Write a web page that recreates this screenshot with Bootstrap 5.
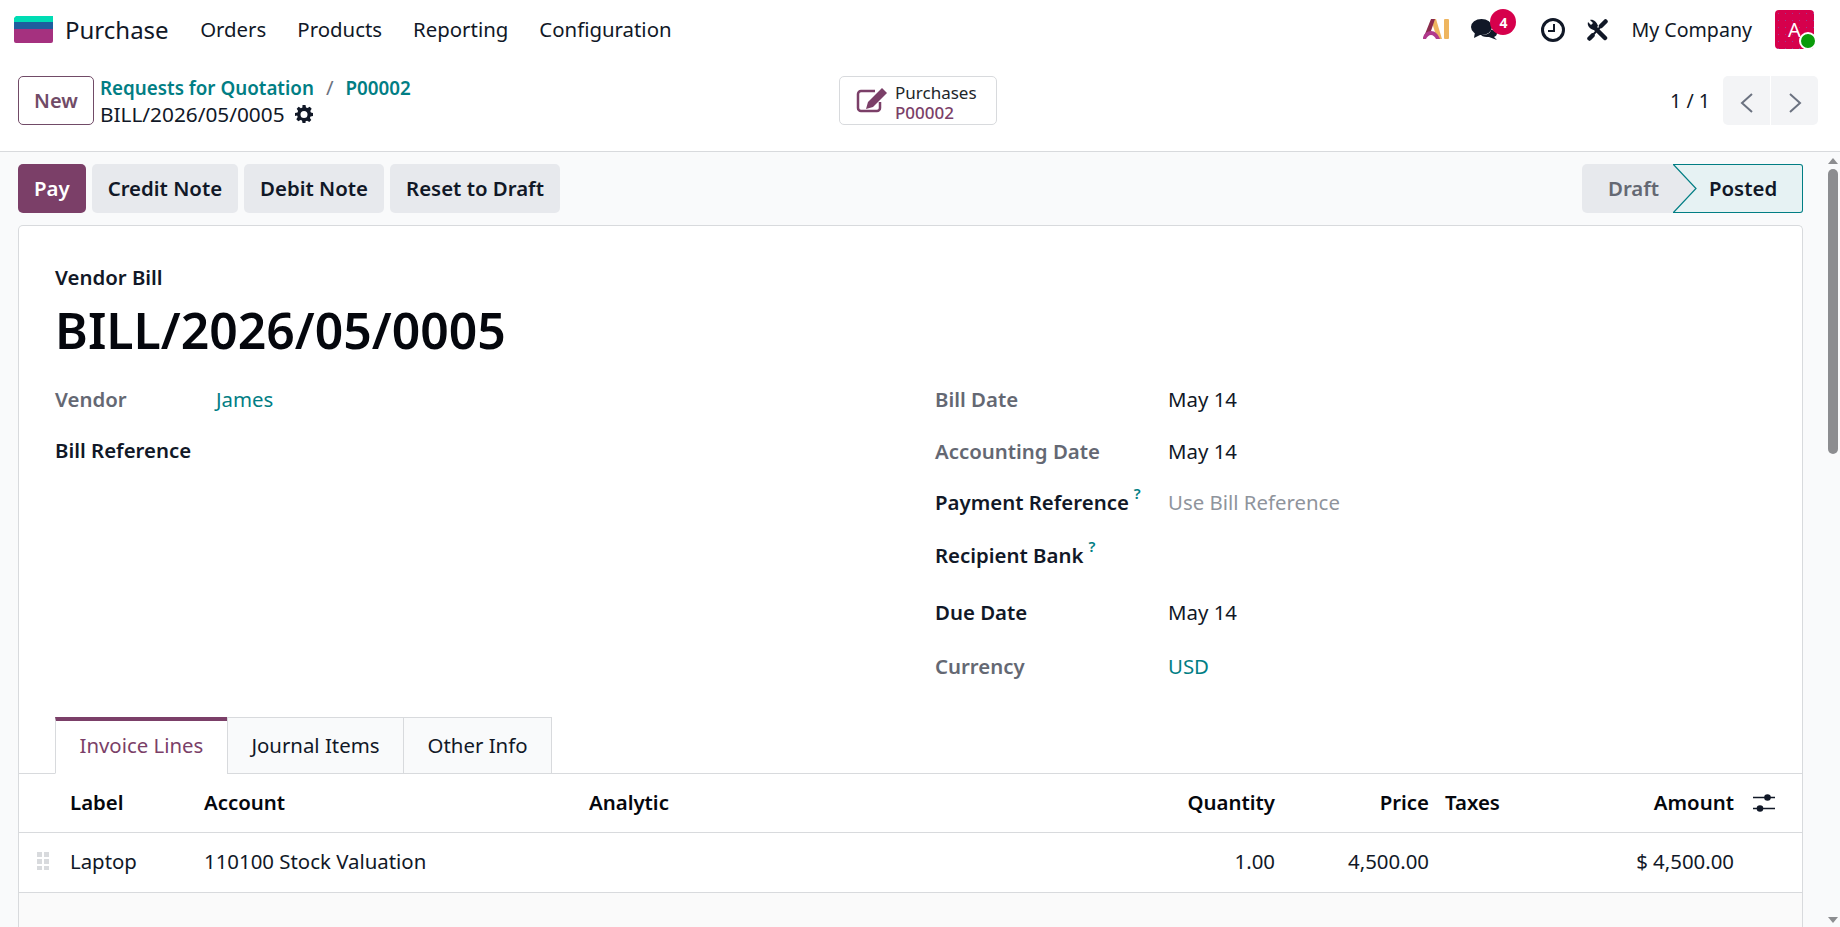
<!DOCTYPE html>
<html lang="en">
<head>
<meta charset="UTF-8">
<title>Purchase - BILL/2026/05/0005</title>
<link href="https://cdn.jsdelivr.net/npm/bootstrap@5.3.3/dist/css/bootstrap.min.css" rel="stylesheet">
<style>
  html, body { height: 100%; }
  body { font-family: "Noto Sans", "Liberation Sans", sans-serif; font-size: 20.4px; color: #111827; background: #fff; overflow: hidden; display: flex; flex-direction: column; }
  a { text-decoration: none; }
  .topbar { height: 59px; padding: 0 26px 0 14px; flex-shrink: 0; }
  .app-logo { width: 39px; height: 27px; }
  .app-name { font-size: 24px; margin-left: 12px; margin-right: 16px; color: #111827; }
  .menu-link { padding: 0 15.5px; color: #111827; }
  .sys-ai { margin-right: 22px; }
  .sys-chat { position: relative; width: 27px; height: 21px; margin-right: 43px; }
  .sys-clock { margin-right: 22px; }
  .sys-tools { margin-right: 23px; }
  .sys-company { margin-right: 23px; font-size: 19.6px; }
  .chat-badge { position: absolute; top: -10px; left: 19px; width: 26px; height: 26px; font-size: 14px; font-weight: 700; background: #d6004c; color: #fff; }
  .avatar { width: 39px; height: 39px; background-color: #d6004c; background-image: radial-gradient(#9a3f96 0.7px, transparent 1px); background-size: 7px 7px; color: #fff; border-radius: 4px; font-size: 20px; }
  .avatar-dot { position: absolute; right: -3px; bottom: -1px; width: 18px; height: 18px; background: #0a9b0a; border: 2px solid #fff; border-radius: 50%; }
  .control-panel { height: 93px; padding: 17px 22px 25px 18px; border-bottom: 1px solid #d8dadd; flex-shrink: 0; }
  .cp-left { flex: 0 0 821px; gap: 6px; }
  .btn-new { width: 76px; height: 49px; color: #714b67; border: 1px solid #714b67; font-weight: 600; font-size: 20px; border-radius: 5px; padding: 0; }
  .crumb-row { height: 25px; margin-top: -1px; margin-bottom: 1px; font-size: 18.800px; }
  .crumb { color: #017e84; font-weight: 600; }
  .crumb-sep { color: #6b7280; margin: 0 12px; font-size: 20.4px; }
  .crumb-current { height: 25px; gap: 10px; font-size: 20.800px; }
  .stat-btn { width: 158px; height: 49px; border: 1px solid #d8dadd; border-radius: 5px; background: #fff; font-size: 17px; line-height: 20px; }
  .stat-text { padding-top: 4px; }
  .stat-btn b { color: #7b3f68; font-weight: 500; }
  .pager-text { margin-right: 13px; font-size: 19.6px; }
  .pager-btn { width: 47px; height: 49px; background: #f3f4f6; border: 0; padding: 0; }
  .pager-btn:first-child { border-radius: 5px 0 0 5px; margin-right: 1px; }
  .pager-btn:last-child { border-radius: 0 5px 5px 0; }
  .workspace { flex: 1; min-height: 0; background: #f9fafb; }
  .content { flex: 1; min-width: 0; padding: 12px 23px 0 18px; }
  .scroll-rail { width: 14px; flex-shrink: 0; padding-top: 6px; }
  .scroll-arrow-up { width: 0; height: 0; border: 5px solid transparent; border-top: 0; border-bottom: 6px solid #8c8d90; margin: 0 auto; }
  .scroll-arrow-down { width: 0; height: 0; border: 5px solid transparent; border-bottom: 0; border-top: 6px solid #8c8d90; margin: 0 auto; }
  .scroll-thumb { width: 10px; height: 285px; background: #8c8d90; border-radius: 5px; margin: 5px auto 0; }
  .scroll-fill { flex: 1; }
  .act-btn { height: 49px; background: #e7e9ed; color: #111827; font-weight: 600; font-size: 20.4px; border: 0; border-radius: 5px; padding: 0 16px; }
  .act-btn.primary { background: #7b3f68; color: #fff; }
  .status-bar { height: 49px; width: 221px; }
  .status-draft { width: 92px; background: #e7e9ed; color: #646873; font-weight: 600; border-radius: 5px 0 0 5px; padding-left: 26px; }
  .status-posted { flex: 1; background: #e6f2f3; font-weight: 600; padding-left: 35px; border: 1px solid #017e84; border-left: 0; border-radius: 0 3px 3px 0; position: relative; }
  .status-arrow { position: absolute; left: -1px; top: -1px; width: 24px; height: 49px; }
  .sheet { background: #fff; border: 1px solid #d8dadd; border-bottom: 0; border-radius: 5px 5px 0 0; margin-top: 12px; height: 720px; }
  .sheet-head { padding: 39px 36px 0; height: 147px; }
  .doc-type { font-weight: 600; line-height: 25px; }
  .doc-title { font-size: 49.9px; font-weight: 600; line-height: 65px; margin: 8px 0 0; color: #05070d; }
  .fields { padding: 0 36px; height: 344px; }
  .field { height: 52px; align-items: center; }
  .field.h50 { height: 50px; }
  .field.h51 { height: 51px; }
  .field.h57 { height: 57px; }
  .lbl { color: #646873; font-weight: 600; }
  .lbl.strong { color: #111827; }
  .col-l .lbl { width: 161px; }
  .col-r .lbl { width: 233px; }
  .col-l { width: 880px; }
  .val-link { color: #017e84; }
  .help { color: #017e84; font-size: 15px; font-weight: 600; position: relative; top: -11px; margin-left: 5px; }
  .muted-val { color: #8f949c; }
  .doc-tabs { padding-left: 36px; border-bottom: 1px solid #d8dadd; height: 57px; margin-bottom: 0; }
  .doc-tabs .nav-link { height: 57px; border-radius: 0; border: 1px solid #d8dadd; margin: 0 -1px 0 0; background: #f9fafb; color: #111827; padding: 0 23.5px; line-height: 54px; }
  .doc-tabs .nav-link.active { background: #fff; color: #7b3f68; border-top: 4px solid #7b3f68; border-bottom-color: #fff; line-height: 48px; }
  .lines { --bs-table-bg: transparent; margin: 0; }
  .lines th, .lines td { border-color: #d8dadd; padding: 0 8px; vertical-align: middle; color: #111827; }
  .lines th { height: 58px; font-weight: 600; color: #05070d; }
  .lines td { height: 60px; font-weight: 400; padding-bottom: 2px; }
  .grip { width: 43px; padding-left: 18px !important; }
  .sheet-rest { background: #fafafa; }
</style>
</head>
<body>
  <nav class="navbar topbar d-flex align-items-center justify-content-between">
    <div class="d-flex align-items-center">
      <svg class="app-logo" viewBox="0 0 39 27"><path d="M2 0h37v6H0V2z" fill="#00dcb4"/><rect y="6" width="39" height="7" fill="#1e5e9e"/><path d="M0 13h39v12a2 2 0 0 1-2 2H2a2 2 0 0 1-2-2z" fill="#a5317f"/></svg>
      <span class="app-name">Purchase</span>
      <a class="menu-link" href="#">Orders</a>
      <a class="menu-link" href="#">Products</a>
      <a class="menu-link" href="#">Reporting</a>
      <a class="menu-link" href="#">Configuration</a>
    </div>
    <div class="d-flex align-items-center">
      <svg class="sys-ai" width="26" height="21" viewBox="0 0 26 21">
        <path d="M8 0h5l6 20h-5z" fill="#eeb55f"/>
        <path d="M8 0h4L7 15 0 20z" fill="#8a2b4c"/>
        <path d="M0 20c0-5 4-8 8-8s7 3 9 8h-4c-1-2-3-4-5-4s-4 2-5 4z" fill="#b0398c"/>
        <rect x="21" width="5" height="20" rx="1" fill="#eeb55f"/>
      </svg>
      <div class="sys-chat">
        <svg width="27" height="21" viewBox="0 0 27 21" class="d-block">
          <path d="M20 11c3 0 6 1 6 3 0 2-1 3-3 4l3 3-8-3c-3 0-6 0-8-2 5 0 9-1 10-5z" fill="#111827"/>
          <ellipse cx="10.500" cy="8" rx="10.500" ry="8" fill="#111827"/>
          <path d="M4 13 3 19l8-4z" fill="#111827"/>
        </svg>
        <span class="chat-badge rounded-circle d-flex align-items-center justify-content-center">4</span>
      </div>
      <svg class="sys-clock" width="24" height="24" viewBox="0 0 24 24"><circle cx="12" cy="12" r="10.500" fill="none" stroke="#111827" stroke-width="3"/><path d="M13 6v7H7" fill="none" stroke="#111827" stroke-width="2"/></svg>
      <svg class="sys-tools" width="21" height="22" viewBox="0 0 21 22">
        <path d="M18 3 3 19" stroke="#111827" stroke-width="2" fill="none"/>
        <path d="M18.500 2.500 14 7M5.500 16.500 2.500 19.500" stroke="#111827" stroke-width="4.500" stroke-linecap="round" fill="none"/>
        <path d="M7 8l11 11" stroke="#111827" stroke-width="4.500" stroke-linecap="round" fill="none"/>
        <path d="M1 3c-1 3 1 7 6 8l4-4C10 3 6 0 3 1l3 3-2 2z" fill="#111827"/>
      </svg>
      <span class="sys-company">My Company</span>
      <div class="avatar position-relative d-flex align-items-center justify-content-center">A<span class="avatar-dot"></span></div>
    </div>
  </nav>

  <div class="control-panel d-flex align-items-start">
    <div class="cp-left d-flex align-items-start">
      <button class="btn btn-new">New</button>
      <div class="lh-sm">
        <div class="crumb-row"><a class="crumb" href="#">Requests for Quotation</a><span class="crumb-sep">/</span><a class="crumb" href="#">P00002</a></div>
        <div class="crumb-current d-flex align-items-center">BILL/2026/05/0005
          <svg width="18" height="18" viewBox="0 0 18 18"><path fill-rule="evenodd" d="M7.500 0h3l.5 2.500 1.500.6L14.700 1.700l2 2-1.400 2.200.6 1.500L18 8v3l-2.500.5-.6 1.500 1.400 2.100-2 2-2.200-1.400-1.500.6L10.500 18h-3l-.5-2.500-1.500-.6-2.200 1.400-2-2 1.400-2.200-.6-1.500L0 11V8l2.500-.5.6-1.500-1.400-2.200 2-2L5.900 3.200l1.500-.6zM9 6a3.500 3.500 0 1 0 0 7 3.500 3.500 0 0 0 0-7z" fill="#111827"/></svg>
        </div>
      </div>
    </div>
    <a class="stat-btn d-flex align-items-center text-body" href="#">
      <svg width="31" height="25" viewBox="0 0 31 25" style="margin:0 8px 0 16px"><path d="M19 3H5a3 3 0 0 0-3 3v14a3 3 0 0 0 3 3h16a3 3 0 0 0 3-3v-6" fill="none" stroke="#7b3f68" stroke-width="2.500"/><path d="M26 0l5 5-14 14-7 2 2-7z" fill="#7b3f68"/></svg>
      <span class="stat-text"><span class="d-block">Purchases</span><b class="d-block">P00002</b></span>
    </a>
    <div class="d-flex align-items-center ms-auto">
      <span class="pager-text">1 / 1</span>
      <div class="d-flex">
        <button class="pager-btn"><svg width="14" height="22" viewBox="0 0 14 22"><path d="M12 2 2 11l10 9" fill="none" stroke="#6b7280" stroke-width="2"/></svg></button>
        <button class="pager-btn"><svg width="14" height="22" viewBox="0 0 14 22"><path d="M2 2l10 9-10 9" fill="none" stroke="#6b7280" stroke-width="2"/></svg></button>
      </div>
    </div>
  </div>

  <div class="workspace d-flex">
    <div class="content">
      <div class="d-flex justify-content-between">
        <div class="d-flex" style="gap:6px">
          <button class="act-btn primary">Pay</button>
          <button class="act-btn">Credit Note</button>
          <button class="act-btn">Debit Note</button>
          <button class="act-btn">Reset to Draft</button>
        </div>
        <div class="status-bar d-flex">
          <div class="status-draft d-flex align-items-center">Draft</div>
          <div class="status-posted d-flex align-items-center">Posted
            <svg class="status-arrow" viewBox="0 0 24 49"><path d="M0 0l23 24.500L0 49z" fill="#e7e9ed"/><path d="M0 0l23 24.500L0 49" fill="none" stroke="#017e84" stroke-width="1.200"/></svg>
          </div>
        </div>
      </div>
      <div class="sheet">
        <div class="sheet-head">
          <div class="doc-type">Vendor Bill</div>
          <h1 class="doc-title">BILL/2026/05/0005</h1>
        </div>
        <div class="fields d-flex">
          <div class="col-l">
            <div class="field d-flex"><span class="lbl">Vendor</span><a class="val-link" href="#">James</a></div>
            <div class="field h51 d-flex"><span class="lbl strong">Bill Reference</span></div>
          </div>
          <div class="col-r">
            <div class="field d-flex"><span class="lbl">Bill Date</span><span>May 14</span></div>
            <div class="field d-flex"><span class="lbl">Accounting Date</span><span>May 14</span></div>
            <div class="field h50 d-flex"><span class="lbl strong">Payment Reference<span class="help">?</span></span><span class="muted-val">Use Bill Reference</span></div>
            <div class="field h57 d-flex"><span class="lbl strong">Recipient Bank<span class="help">?</span></span></div>
            <div class="field h57 d-flex"><span class="lbl strong">Due Date</span><span>May 14</span></div>
            <div class="field h51 d-flex"><span class="lbl">Currency</span><a class="val-link" href="#">USD</a></div>
          </div>
        </div>
        <ul class="nav doc-tabs">
          <li class="nav-item"><a class="nav-link active" href="#">Invoice Lines</a></li>
          <li class="nav-item"><a class="nav-link" href="#">Journal Items</a></li>
          <li class="nav-item"><a class="nav-link" href="#">Other Info</a></li>
        </ul>
        <table class="table lines">
          <thead>
            <tr>
              <th class="grip"></th>
              <th style="width:134px">Label</th>
              <th style="width:385px">Account</th>
              <th>Analytic</th>
              <th class="text-end" style="width:120px">Quantity</th>
              <th class="text-end" style="width:154px">Price</th>
              <th style="width:120px">Taxes</th>
              <th class="text-end" style="width:185px">Amount</th>
              <th style="width:60px"><svg width="22" height="18" viewBox="0 0 22 18" class="d-block" style="margin-left:3px"><path d="M0 3.500h22M0 14.500h22" stroke="#111827" stroke-width="1.400"/><circle cx="14.500" cy="3.500" r="3.300" fill="#111827"/><circle cx="7" cy="14.500" r="3.300" fill="#111827"/></svg></th>
            </tr>
          </thead>
          <tbody>
            <tr>
              <td class="grip"><svg width="12" height="18" viewBox="0 0 12 18" class="d-block"><g fill="#d8dadd"><rect width="5" height="5"/><rect x="7" width="5" height="5"/><rect y="7" width="5" height="5"/><rect x="7" y="7" width="5" height="5"/><rect y="14" width="5" height="4"/><rect x="7" y="14" width="5" height="4"/></g></svg></td>
              <td>Laptop</td>
              <td>110100 Stock Valuation</td>
              <td></td>
              <td class="text-end">1.00</td>
              <td class="text-end">4,500.00</td>
              <td></td>
              <td class="text-end">$ 4,500.00</td>
              <td></td>
            </tr>
          </tbody>
        </table>
        <div class="sheet-rest" style="height:40px"></div>
      </div>
    </div>
    <div class="scroll-rail d-flex flex-column">
      <div class="scroll-arrow-up"></div>
      <div class="scroll-thumb"></div>
      <div class="scroll-fill"></div>
      <div class="scroll-arrow-down mb-1"></div>
    </div>
  </div>
  <script src="https://cdn.jsdelivr.net/npm/bootstrap@5.3.3/dist/js/bootstrap.bundle.min.js"></script>
</body>
</html>
